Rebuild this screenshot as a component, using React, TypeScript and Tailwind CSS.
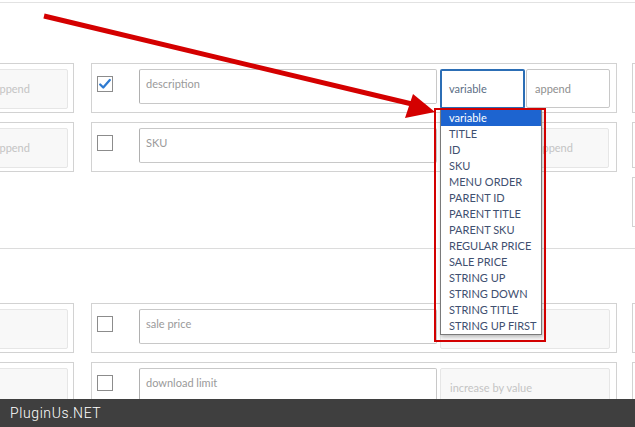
import React from "react";

const BORDER = "border border-[#d2d2d2]";

const OPTIONS = [
  "variable",
  "TITLE",
  "ID",
  "SKU",
  "MENU ORDER",
  "PARENT ID",
  "PARENT TITLE",
  "PARENT SKU",
  "REGULAR PRICE",
  "SALE PRICE",
  "STRING UP",
  "STRING DOWN",
  "STRING TITLE",
  "STRING UP FIRST",
];

function Checkbox({ checked }: { checked?: boolean }) {
  return (
    <div className="mt-[7px] flex h-[16px] w-[16px] items-center justify-center border border-[#8c8c8c] bg-white">
      {checked && (
        <svg viewBox="0 0 16 16" className="h-[14px] w-[14px]">
          <path d="M2.5 8.5 L6 12 L13.5 3.5" fill="none" stroke="#2f7bd1" strokeWidth="2.6" strokeLinecap="round" strokeLinejoin="round" />
        </svg>
      )}
    </div>
  );
}

function DisabledInput({ text, width = "w-[84px]" }: { text?: string; width?: string }) {
  return (
    <div className={`${width} h-[40px] shrink-0 rounded-[2px] border border-[#e6e6e6] bg-[#f8f8f8] px-[9px] pt-[11px] text-[11px] text-[#c4c4c4]`}>
      {text}
    </div>
  );
}

function SideCell({ text, h = "h-[50px]" }: { text?: string; h?: string }) {
  return (
    <div className={`${BORDER} ${h} w-[96px] shrink-0 pl-[5px] pt-[5px]`}>
      <DisabledInput text={text} />
    </div>
  );
}

function RightCell({ h = "h-[50px]" }: { h?: string }) {
  return <div className={`${BORDER} ${h} w-[80px]`} />;
}

function Row({
  label,
  checked,
  tail,
}: {
  label: string;
  checked?: boolean;
  tail: React.ReactNode;
}) {
  return (
    <div className={`${BORDER} flex h-[50px] w-[526px] items-start pl-[5px] pt-[5px]`}>
      <div className="w-[42px] shrink-0">
        <Checkbox checked={checked} />
      </div>
      <div className="h-[35px] w-[298px] shrink-0 rounded-[2px] border border-[#c8c8c8] border-l-[#b0b0b0] bg-white px-[6px] pt-[6px] text-[11px] text-[#9a9a9a]">
        {label}
      </div>
      <div className="ml-[3px] flex">{tail}</div>
    </div>
  );
}

function SelectBox({ value }: { value?: string }) {
  return (
    <div className="h-[40px] w-[85px] shrink-0 rounded-[2px] border-2 border-[#2c6eb5] bg-white px-[7px] pt-[10px] text-[11px] text-[#5b6e85]">
      {value}
    </div>
  );
}

function AppendInput() {
  return (
    <div className="ml-[1px] h-[39px] w-[84px] shrink-0 rounded-[2px] border border-[#c8c8c8] bg-white px-[8px] pt-[11px] text-[11px] text-[#8f8f8f]">
      append
    </div>
  );
}

export default function App() {
  return (
    <div
      className="relative flex h-[427px] w-[635px] flex-col overflow-hidden bg-white"
      style={{ fontFamily: "Lato, 'Open Sans', sans-serif" }}
    >
      <div className="mt-[2px] h-px w-full shrink-0 bg-[#e2e2e2]" />

      <div className="relative flex-1 overflow-hidden">
        {/* section one */}
        <div className="ml-[-22px] mt-[60px] flex h-[185px] items-start gap-[17px]">
          <div className="flex flex-col gap-[9px]">
            <SideCell text="append" />
            <SideCell text="append" />
          </div>
          <div className="flex flex-col gap-[9px]">
            <Row label="description" checked tail={<><SelectBox value="variable" /><AppendInput /></>} />
            <Row
              label="SKU"
              tail={
                <>
                  <SelectBox />
                  <div className="ml-[2px]">
                    <DisabledInput text="append" width="w-[82px]" />
                  </div>
                </>
              }
            />
          </div>
          <div className="ml-[-2px] flex flex-col gap-[9px]">
            <RightCell />
            <RightCell h="h-[46px]" />
            <RightCell />
          </div>
        </div>

        <div className="h-px w-full bg-[#dcdcdc]" />

        {/* section two */}
        <div className="ml-[-22px] mt-[54px] flex items-start gap-[17px]">
          <div className="flex flex-col gap-[9px]">
            <SideCell />
            <SideCell />
          </div>
          <div className="flex flex-col gap-[9px]">
            <Row label="sale price" tail={<DisabledInput width="w-[170px]" />} />
            <Row label="download limit" tail={<DisabledInput text="increase by value" width="w-[170px]" />} />
          </div>
          <div className="ml-[-2px] flex flex-col gap-[9px]">
            <RightCell />
            <RightCell />
          </div>
        </div>
      </div>

      {/* dropdown list */}
      <div className="absolute left-[440px] top-[109px] w-[102px] border border-[#7a7a7a] bg-white shadow-[1px_2px_4px_rgba(0,0,0,0.25)]">
        {OPTIONS.map((o, i) => (
          <div
            key={o}
            className={`h-[16px] pl-[8px] text-[11px] leading-[15px] ${
              i === 0 ? "bg-[#1d64d0] text-white" : "text-[#3f5070]"
            }`}
          >
            {o}
          </div>
        ))}
      </div>

      {/* red highlight box */}
      <div className="pointer-events-none absolute left-[434px] top-[108px] h-[234px] w-[112px] border-2 border-[#d20000]" />

      {/* arrow */}
      <svg className="pointer-events-none absolute left-0 top-0" width="635" height="427">
        <line x1="44" y1="16" x2="412" y2="104" stroke="#d40000" strokeWidth="5" />
        <polygon points="413,94 435,112 405,118" fill="#d40000" />
      </svg>

      <div
        className="flex h-[28px] shrink-0 items-center bg-[#3f3f3f] pl-[10px] text-[14px] font-light tracking-[0.6px] text-white"
        style={{ fontFamily: "Roboto, sans-serif" }}
      >
        PluginUs.NET
      </div>
    </div>
  );
}
